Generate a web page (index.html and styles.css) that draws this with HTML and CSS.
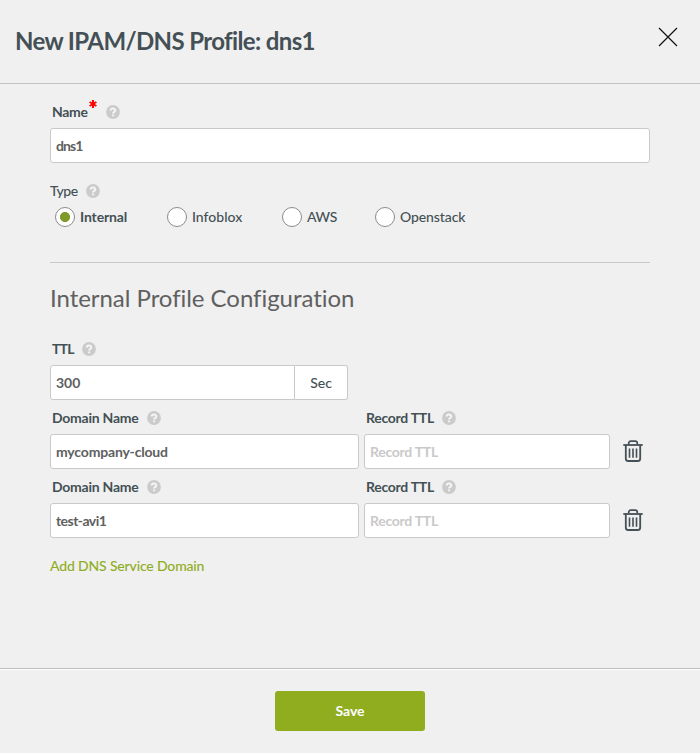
FILE: index.html
```html
<!DOCTYPE html>
<html lang="en">
<head>
<meta charset="utf-8">
<title>New IPAM/DNS Profile</title>
<link rel="stylesheet" href="styles.css">
</head>
<body>
<svg class="defs" width="0" height="0">
  <symbol id="help" viewBox="0 0 14 14">
    <circle cx="7" cy="7" r="6.9" fill="#cbcbcb"/>
    <path d="M4.7 5.6C4.7 2.9 9.3 2.9 9.3 5.5C9.3 6.9 7.1 6.9 7.1 8.6" fill="none" stroke="#f5f5f5" stroke-width="2"/>
    <rect x="6.1" y="9.5" width="2" height="1.8" fill="#f5f5f5"/>
  </symbol>
  <symbol id="trash" viewBox="0 0 20 22">
    <g fill="none" stroke="#445055">
      <path d="M0.3 5H19.7" stroke-width="1.8"/>
      <path d="M5.7 4.5V3.4Q5.7 1.2 7.9 1.2H12.1Q14.3 1.2 14.3 3.4V4.5" stroke-width="1.7"/>
      <path d="M2.8 5V18.4Q2.8 21 5.4 21H14.6Q17.2 21 17.2 18.4V5" stroke-width="1.8"/>
      <path d="M6.5 8.5V17.7M10 8.5V17.7M13.5 8.5V17.7" stroke-width="1.6"/>
    </g>
  </symbol>
</svg>
<div class="modal">
  <header class="header">
    <h1>New IPAM/DNS Profile: dns1</h1>
    <svg class="close" viewBox="0 0 20 20"><path d="M1 1L19 19M19 1L1 19" stroke="#111" stroke-width="1.2"/></svg>
  </header>
  <main class="body">
    <div class="label name"><span class="t-name">Name</span><svg class="star" viewBox="0 0 8 8"><path d="M4 0V8M.6 2L7.4 6M7.4 2L.6 6" stroke="#f00" stroke-width="2"/></svg><svg class="help"><use href="#help"/></svg></div>
    <div class="input"><span class="t-dns">dns1</span></div>
    <div class="label type"><span class="t-type">Type</span><svg class="help"><use href="#help"/></svg></div>
    <div class="radios">
      <div class="radio internal"><i class="dot on"></i><b class="t-internal">Internal</b></div>
      <div class="radio infoblox"><i class="dot"></i><span>Infoblox</span></div>
      <div class="radio aws"><i class="dot"></i><span class="t-aws">AWS</span></div>
      <div class="radio"><i class="dot"></i><span class="t-openstack">Openstack</span></div>
    </div>
    <h2>Internal Profile Configuration</h2>
    <div class="label ttl"><span class="t-ttl">TTL</span><svg class="help"><use href="#help"/></svg></div>
    <div class="group"><div class="input"><span>300</span></div><div class="unit">Sec</div></div>
    <div class="domain">
      <div><div class="label"><span class="t-domain">Domain Name</span><svg class="help"><use href="#help"/></svg></div><div class="input"><span class="t-cloud">mycompany-cloud</span></div></div>
      <div><div class="label"><span class="t-record">Record TTL</span><svg class="help"><use href="#help"/></svg></div><div class="input hint"><span class="t-record">Record TTL</span></div></div>
      <svg class="trash"><use href="#trash"/></svg>
    </div>
    <div class="domain">
      <div><div class="label"><span class="t-domain">Domain Name</span><svg class="help"><use href="#help"/></svg></div><div class="input"><span class="t-avi">test-avi1</span></div></div>
      <div><div class="label"><span class="t-record">Record TTL</span><svg class="help"><use href="#help"/></svg></div><div class="input hint"><span class="t-record">Record TTL</span></div></div>
      <svg class="trash"><use href="#trash"/></svg>
    </div>
    <a class="add">Add DNS Service Domain</a>
  </main>
  <footer class="footer"><button>Save</button></footer>
</div>
</body>
</html>
```
FILE: styles.css
```css
* { box-sizing: border-box; }
body { margin: 0; background: #f0f0f0; font: 14px/20px Lato, "Liberation Sans", sans-serif; color: #445055; }
.defs { display: block; height: 0; }
.modal { display: flex; flex-direction: column; width: 700px; height: 753px; }
.header { display: flex; justify-content: space-between; height: 84px; padding: 26px 22px 0 15px; border-bottom: 1px solid #c2c2c2; }
h1 { margin: 0; font-size: 24px; line-height: 30px; font-weight: 700; letter-spacing: -0.63px; white-space: nowrap; }
.close { width: 20px; height: 20px; margin-top: 1px; }
.body { flex: 1; padding: 18px 50px 0; }
.label { display: flex; align-items: center; height: 20px; padding-left: 2px; font-weight: 700; white-space: nowrap; }
.help { width: 14px; height: 14px; margin-left: 8px; flex: none; }
.star { width: 8px; height: 8px; margin: -17px 1px 0 1px; }
.input { display: flex; align-items: center; height: 35px; padding: 1px 5px 0; border: 1px solid #c9c9c9; border-radius: 3px; background: #fff; color: #606060; font-weight: 700; }
.name + .input { margin-top: 6px; }
.type { margin-top: 18px; padding-left: 0; font-weight: 500; }
.radios { display: flex; height: 56px; margin-top: 6px; padding-left: 5px; border-bottom: 1px solid #c9c9c9; }
.radio { display: flex; height: 20px; gap: 5px; font-weight: 500; white-space: nowrap; }
.internal { width: 112px; }
.infoblox { width: 115px; }
.aws { width: 93px; }
.dot { flex: none; width: 20px; height: 20px; border: 1px solid #8c8c8c; border-radius: 50%; background: #fff; }
.on { background: radial-gradient(circle, #7f9a28 4.7px, #fff 5.3px); }
h2 { margin: 20px 0 0; font-size: 24px; line-height: 30px; font-weight: 400; letter-spacing: -0.04px; color: #606060; white-space: nowrap; }
.ttl { margin-top: 26px; }
.group { display: flex; width: 298px; margin: 6px 0 8px; }
.group .input { width: 245px; border-radius: 3px 0 0 3px; }
.unit { flex: 1; height: 35px; border: 1px solid #c9c9c9; border-left: 0; border-radius: 0 3px 3px 0; background: #fff; text-align: center; line-height: 33px; font-weight: 500; }
.domain { display: grid; grid-template-columns: 309px 246px 20px; column-gap: 5px; height: 61px; margin-bottom: 8px; }
.domain .input { margin-top: 6px; }
.hint { color: #c9c9c9; }
.trash { width: 20px; height: 22px; margin: 32px 0 0 7.5px; }
.add { display: block; margin-top: 18px; color: #8fad24; font-weight: 500; letter-spacing: -0.16px; }
.t-name { letter-spacing: -0.3px; }
.t-dns { letter-spacing: -0.9px; }
.t-type { letter-spacing: -0.5px; }
.t-internal { letter-spacing: -0.12px; }
.t-aws { letter-spacing: -0.3px; }
.t-openstack { letter-spacing: -0.1px; }
.t-ttl { letter-spacing: -0.8px; }
.t-domain { letter-spacing: -0.24px; }
.t-cloud { letter-spacing: -0.18px; }
.t-record { letter-spacing: -0.27px; }
.t-avi { letter-spacing: -0.55px; }
.footer { height: 85px; padding-top: 21px; border-top: 1px solid #bdbdbd; box-shadow: inset 0 1px #fff; text-align: center; }
button { width: 150px; height: 40px; padding: 0 0 2px; border: 0; border-radius: 3px; background: #8fad1f; color: #fff; font: 700 14px Lato, sans-serif; margin-top: 1px; }
```
